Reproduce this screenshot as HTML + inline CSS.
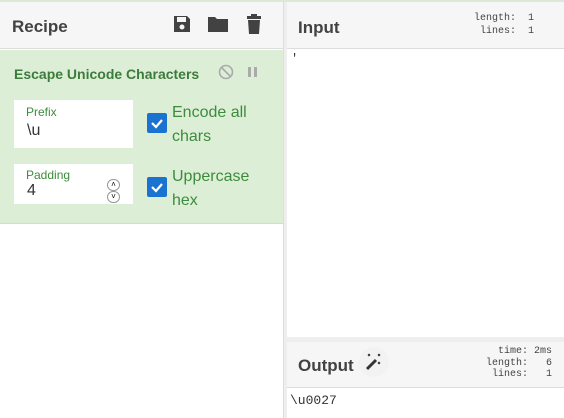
<!DOCTYPE html>
<html><head><style>
*{margin:0;padding:0;box-sizing:border-box}
body{width:564px;height:418px;overflow:hidden;background:#fff;font-family:"Liberation Sans",sans-serif;position:relative}
.a{position:absolute}
.mono{font-family:"Liberation Mono",monospace}
</style></head><body>
<div class="a" style="left:0;top:0;width:564px;height:2px;background:#dbe9d6"></div>
<div class="a" style="left:0;top:2px;width:283px;height:47px;background:#f6f6f6;border-bottom:1px solid #ddd"></div>
<div class="a" style="left:12px;top:17px;font-size:17px;font-weight:bold;color:#424242">Recipe</div>
<svg class="a" style="left:172px;top:14px" width="20" height="20" viewBox="0 0 20 20"><path d="M2 2h13l3 3v13H2z" fill="#424242"/><rect x="5" y="3" width="9" height="5" fill="#f6f6f6"/><circle cx="10" cy="13" r="2.5" fill="#f6f6f6"/></svg>
<svg class="a" style="left:207px;top:15px" width="22" height="18" viewBox="0 0 22 18"><path d="M1 2h7l2 2h11v13H1z" fill="#424242"/></svg>
<svg class="a" style="left:246px;top:14px" width="16" height="20" viewBox="0 0 16 20"><rect x="1" y="2" width="14" height="3" fill="#424242"/><rect x="5" y="0" width="6" height="3" fill="#424242"/><path d="M2 6h12l-1 14H3z" fill="#424242"/></svg>
<div class="a" style="left:0;top:50px;width:283px;height:174px;background:#dcefd6;border-bottom:1px solid #cfe0c9"></div>
<div class="a" style="left:14px;top:66px;font-size:14px;font-weight:bold;color:#3d7b3d">Escape Unicode Characters</div>
<svg class="a" style="left:218px;top:64px" width="16" height="16"><circle cx="8" cy="8" r="6.5" fill="none" stroke="#aaa" stroke-width="1.6"/><path d="M3.5 3.5l9 9" stroke="#aaa" stroke-width="1.6"/></svg>
<div class="a" style="left:248px;top:67px;width:3px;height:10px;background:#aaa"></div>
<div class="a" style="left:254px;top:67px;width:3px;height:10px;background:#aaa"></div>
<div class="a" style="left:14px;top:100px;width:119px;height:48px;background:#fff"></div>
<div class="a" style="left:26px;top:105px;font-size:12px;color:#3d8b3d">Prefix</div>
<div class="a" style="left:27px;top:122px;font-size:16px;color:#333">\u</div>
<div class="a" style="left:14px;top:164px;width:119px;height:40px;background:#fff"></div>
<div class="a" style="left:26px;top:168px;font-size:12px;color:#3d8b3d">Padding</div>
<div class="a" style="left:27px;top:182px;font-size:16px;color:#333">4</div>
<div class="a" style="left:107px;top:179px;width:13px;height:12px;border:1px solid #999;border-radius:6px;font-size:8px;text-align:center;line-height:10px">˄</div>
<div class="a" style="left:107px;top:191px;width:13px;height:12px;border:1px solid #999;border-radius:6px;font-size:8px;text-align:center;line-height:10px">˅</div>
<svg class="a" style="left:147px;top:113px" width="20" height="20"><rect width="20" height="20" rx="2" fill="#1a73d1"/><path d="M5 10l4 4 6-7" stroke="#fff" stroke-width="2.2" fill="none"/></svg>
<svg class="a" style="left:147px;top:177px" width="20" height="20"><rect width="20" height="20" rx="2" fill="#1a73d1"/><path d="M5 10l4 4 6-7" stroke="#fff" stroke-width="2.2" fill="none"/></svg>
<div class="a" style="left:172px;top:101px;font-size:16px;line-height:24px;color:#3d8b3d">Encode all<br>chars</div>
<div class="a" style="left:172px;top:165px;font-size:16px;line-height:24px;color:#3d8b3d">Uppercase<br>hex</div>
<div class="a" style="left:283px;top:2px;width:4px;height:416px;background:#eee;border-left:1px solid #ddd"></div>
<div class="a" style="left:287px;top:2px;width:277px;height:47px;background:#f6f6f6;border-bottom:1px solid #ddd"></div>
<div class="a" style="left:298px;top:18px;font-size:17px;font-weight:bold;color:#424242">Input</div>
<div class="a mono" style="left:430px;top:12px;font-size:10px;line-height:13px;color:#444;text-align:right;width:104px;white-space:pre">length:  1
lines:  1</div>
<div class="a mono" style="left:291px;top:52px;font-size:12px;color:#333">'</div>
<div class="a" style="left:287px;top:337px;width:277px;height:5px;background:#eee"></div>
<div class="a" style="left:287px;top:342px;width:277px;height:46px;background:#f6f6f6;border-bottom:1px solid #ddd"></div>
<div class="a" style="left:298px;top:356px;font-size:17px;font-weight:bold;color:#424242">Output</div>
<div class="a" style="left:359px;top:347px;width:30px;height:30px;border-radius:50%;background:#f2f2f2"></div>
<svg class="a" style="left:364px;top:352px" width="20" height="20"><path d="M3 17l9-9" stroke="#333" stroke-width="3"/><path d="M4 2l2 2M6 2L4 4M14 2l2 2M16 2l-2 2M14 10l2 2M16 10l-2 2" stroke="#333" stroke-width="1"/></svg>
<div class="a mono" style="left:460px;top:346px;font-size:10px;line-height:11.5px;color:#444;text-align:right;width:92px;white-space:pre">time: 2ms
length:   6
lines:   1</div>
<div class="a mono" style="left:290px;top:393px;font-size:13px;color:#333">\u0027</div>
</body></html>
